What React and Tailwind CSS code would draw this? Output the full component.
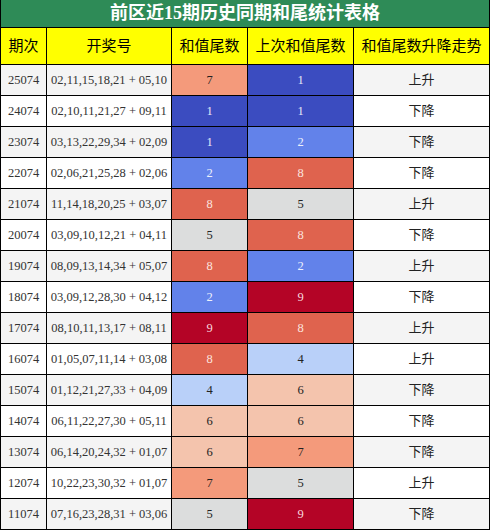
import React from "react";

const rows = [
  ["25074", "02,11,15,18,21 + 05,10", 7, 1, "上升"],
  ["24074", "02,10,11,21,27 + 09,11", 1, 1, "下降"],
  ["23074", "03,13,22,29,34 + 02,09", 1, 2, "下降"],
  ["22074", "02,06,21,25,28 + 02,06", 2, 8, "下降"],
  ["21074", "11,14,18,20,25 + 03,07", 8, 5, "上升"],
  ["20074", "03,09,10,12,21 + 04,11", 5, 8, "下降"],
  ["19074", "08,09,13,14,34 + 05,07", 8, 2, "上升"],
  ["18074", "03,09,12,28,30 + 04,12", 2, 9, "下降"],
  ["17074", "08,10,11,13,17 + 08,11", 9, 8, "上升"],
  ["16074", "01,05,07,11,14 + 03,08", 8, 4, "上升"],
  ["15074", "01,12,21,27,33 + 04,09", 4, 6, "下降"],
  ["14074", "06,11,22,27,30 + 05,11", 6, 6, "下降"],
  ["13074", "06,14,20,24,32 + 01,07", 6, 7, "下降"],
  ["12074", "10,22,23,30,32 + 01,07", 7, 5, "上升"],
  ["11074", "07,16,23,28,31 + 03,06", 5, 9, "下降"],
];

// coolwarm 色阶
const heat = {
  1: "bg-[#3b4cc0] text-[#e8eaf6]",
  2: "bg-[#6282ea] text-[#eef1fb]",
  4: "bg-[#b9d0f9] text-[#222]",
  5: "bg-[#dcdddd] text-[#222]",
  6: "bg-[#f4c4ad] text-[#222]",
  7: "bg-[#f49a7b] text-[#222]",
  8: "bg-[#df634e] text-[#fbe3de]",
  9: "bg-[#b40426] text-[#f8d8de]",
};

const font = { fontFamily: '"Liberation Serif", "Noto Sans CJK SC", serif' };

function Cell({ w, className = "", children }) {
  return (
    <div className={`${w} h-full flex items-center justify-center border-r border-black ${className}`}>
      {children}
    </div>
  );
}

export default function App() {
  return (
    <div className="w-[490px] bg-white" style={font}>
      <div className="w-[490px] border-l border-black">
        <div className="h-[28px] bg-[#2e8b57] border-r border-b border-black flex items-center justify-center text-white font-bold text-[18px]">
          前区近15期历史同期和尾统计表格
        </div>
        <div className="h-[37px] flex bg-[#ffff00] border-b border-black text-[15px] text-black">
          <Cell w="w-[46px]">期次</Cell>
          <Cell w="w-[125px]">开奖号</Cell>
          <Cell w="w-[76px]">和值尾数</Cell>
          <Cell w="w-[106px]">上次和值尾数</Cell>
          <Cell w="w-[136px]">和值尾数升降走势</Cell>
        </div>
        {rows.map((r, i) => (
          <div
            key={r[0]}
            className={`h-[31px] flex border-b border-black text-[12.5px] text-[#333] ${i % 2 === 0 ? "bg-[#f4f4f4]" : "bg-white"}`}
          >
            <Cell w="w-[46px]">{r[0]}</Cell>
            <Cell w="w-[125px]">{r[1]}</Cell>
            <Cell w="w-[76px]" className={heat[r[2]]}>{r[2]}</Cell>
            <Cell w="w-[106px]" className={heat[r[3]]}>{r[3]}</Cell>
            <Cell w="w-[136px]" className="text-[13px] text-[#222]">{r[4]}</Cell>
          </div>
        ))}
      </div>
    </div>
  );
}
